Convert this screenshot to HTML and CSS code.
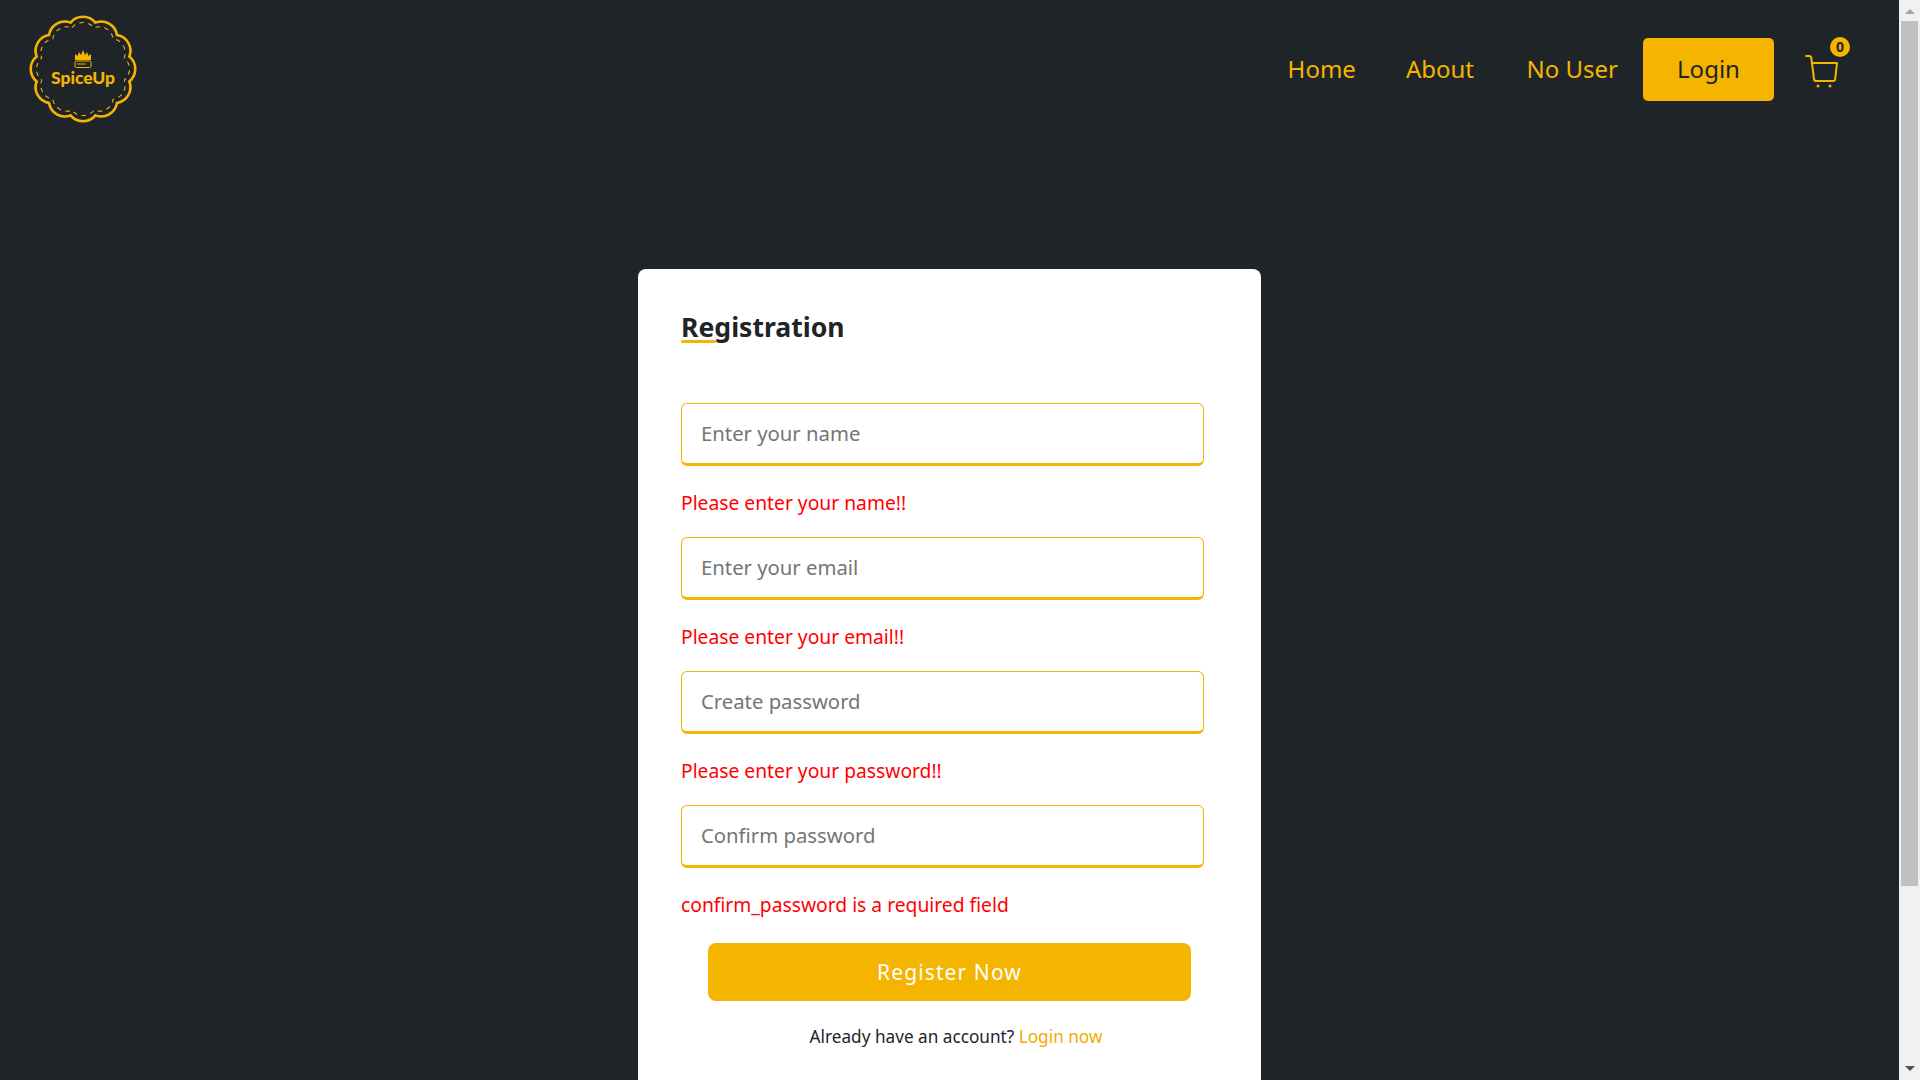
FILE: index.html
```html
<!DOCTYPE html>
<html lang="en">
<head>
<meta charset="utf-8">
<title>SpiceUp - Registration</title>
<link rel="stylesheet" href="styles.css">
</head>
<body>
<div class="page">
<header class="topbar">
  <a class="logo" href="#" aria-label="SpiceUp">
    <svg class="logo-badge" viewBox="-55 -55 110 110" width="110" height="110" fill="none">
      <defs>
        <path id="scallop" d="M-12.42 -46.36A16 16 0 0 1 12.42 -46.36A16 16 0 0 1 33.94 -33.94A16 16 0 0 1 46.36 -12.42A16 16 0 0 1 46.36 12.42A16 16 0 0 1 33.94 33.94A16 16 0 0 1 12.42 46.36A16 16 0 0 1 -12.42 46.36A16 16 0 0 1 -33.94 33.94A16 16 0 0 1 -46.36 12.42A16 16 0 0 1 -46.36 -12.42A16 16 0 0 1 -33.94 -33.94A16 16 0 0 1 -12.42 -46.36Z"/>
      </defs>
      <use href="#scallop" stroke="#f4b400" stroke-width="2.6"/>
      <use href="#scallop" transform="scale(.89)" stroke="#f4b400" stroke-width="1.2" stroke-dasharray="5 5"/>
      <path d="M-8 -9L-8 -15L-5.500 -13L-4 -17L-2 -14L0 -19L2 -14L4 -17L5.500 -13L8 -15L8 -9Z" fill="#f4b400"/>
      <rect x="-8" y="-8" width="16" height="6.500" rx="1.500" stroke="#f4b400" stroke-width="1"/>
      <path d="M-6 -5H3" stroke="#f4b400" stroke-width="1"/>
      <text class="logo-text" x="0" y="15" text-anchor="middle">SpiceUp</text>
    </svg>
  </a>
  <nav class="nav">
    <a class="nav-link" href="#">Home</a>
    <a class="nav-link" href="#">About</a>
    <a class="nav-link" href="#">No User</a>
    <a class="nav-btn" href="#">Login</a>
    <a class="cart" href="#" aria-label="Cart">
      <svg viewBox="0 0 36 36" width="36" height="36" fill="none" stroke="#f4b400" stroke-width="2" stroke-linecap="round" stroke-linejoin="round">
        <path d="M1 4H4.500Q6 4 6.300 6L9 27Q9.300 29 11 29H28Q30 29 30.200 27L32 11H6.800"/>
        <circle cx="13" cy="34" r="1.500" fill="#f4b400" stroke="none"/>
        <circle cx="25" cy="34" r="1.500" fill="#f4b400" stroke="none"/>
      </svg>
      <span class="badge">0</span>
    </a>
  </nav>
</header>
<main class="content">
  <section class="card">
    <h1 class="title">Registration</h1>
    <form class="form">
      <div class="field">
        <input class="input" type="text" placeholder="Enter your name">
        <p class="error">Please enter your name!!</p>
      </div>
      <div class="field">
        <input class="input" type="text" placeholder="Enter your email">
        <p class="error">Please enter your email!!</p>
      </div>
      <div class="field">
        <input class="input" type="password" placeholder="Create password">
        <p class="error">Please enter your password!!</p>
      </div>
      <div class="field">
        <input class="input" type="password" placeholder="Confirm password">
        <p class="error">confirm_password is a required field</p>
      </div>
      <button class="submit" type="button">Register Now</button>
    </form>
    <p class="switch">Already have an account? <a href="#">Login now</a></p>
  </section>
</main>
</div>
<aside class="scrollbar" aria-hidden="true">
  <span class="arrow-up"></span>
  <span class="thumb"></span>
  <span class="arrow-down"></span>
</aside>
</body>
</html>
```

FILE: styles.css
```css
* {
  box-sizing: border-box;
}

body {
  display: flex;
  height: 1080px;
  margin: 0;
  overflow: hidden;
  background: #1f2429;
  font-family: "Noto Sans", "Open Sans", sans-serif;
  color: #1f2429;
}

.page {
  flex: 1;
  min-width: 0;
}

.scrollbar {
  display: flex;
  flex-direction: column;
  align-items: center;
  width: 21px;
  padding: 9px 0 9px;
  background: #f1f1f1;
}

.arrow-up {
  width: 0;
  height: 0;
  border-left: 5px solid transparent;
  border-right: 5px solid transparent;
  border-bottom: 5px solid #a3a3a3;
}

.thumb {
  width: 17px;
  height: 865px;
  margin: 7px 0 auto;
  background: #c1c1c1;
}

.arrow-down {
  width: 0;
  height: 0;
  border-left: 5px solid transparent;
  border-right: 5px solid transparent;
  border-top: 5px solid #505050;
}

.topbar {
  display: flex;
  align-items: center;
  justify-content: space-between;
  height: 138px;
  padding: 0 58px 0 28px;
}

.logo {
  display: flex;
}

.logo-text {
  font-family: "Lato", "Noto Sans", sans-serif;
  font-size: 17.500px;
  font-weight: 900;
  fill: #f4b400;
}

.nav {
  display: flex;
  align-items: center;
}

.nav-link {
  margin: 0 50px 2px 0;
  font-size: 24px;
  color: #f4b400;
  text-decoration: none;
}

.nav-link:nth-child(2) {
  margin-right: 52.500px;
}

.nav-link:nth-child(3) {
  margin-right: 25px;
}

.nav-btn {
  display: flex;
  align-items: center;
  justify-content: center;
  width: 131px;
  height: 63px;
  padding-bottom: 2px;
  border-radius: 5px;
  background: #f4b400;
  color: #1f2429;
  font-size: 24px;
  text-decoration: none;
}

.cart {
  position: relative;
  display: flex;
  margin: 2px 0 0 31px;
}

.badge {
  position: absolute;
  top: -15px;
  right: -9px;
  width: 20px;
  height: 20px;
  border-radius: 50%;
  background: #f4b400;
  color: #1f2429;
  font-size: 14px;
  font-weight: 700;
  line-height: 20px;
  text-align: center;
}

.content {
  display: flex;
  justify-content: center;
  padding-top: 131px;
}

.card {
  width: 623px;
  padding: 38px 57px 45px 43px;
  border-radius: 8px;
  background: #fff;
}

.title {
  position: relative;
  width: max-content;
  height: 42px;
  margin: 0 0 54px;
  font-size: 26.600px;
  font-weight: 700;
  line-height: 40px;
}

.title::after {
  content: "";
  position: absolute;
  left: 0;
  top: 33px;
  width: 35px;
  height: 3px;
  border-radius: 2px;
  background: #f4b400;
}

.form {
  display: flex;
  flex-direction: column;
}

.field {
  display: flex;
  flex-direction: column;
  height: 134px;
}

.input {
  width: 100%;
  height: 63px;
  padding: 0 19px 2px;
  border: 1px solid #f4b400;
  border-bottom-width: 3px;
  border-radius: 6px;
  outline: none;
  background: #fff;
  font-family: inherit;
  font-size: 20.300px;
}

.input::placeholder {
  color: #757575;
  opacity: 1;
}

.error {
  margin: 24px 0 0;
  color: #ff0000;
  font-size: 19.250px;
  line-height: 26px;
}

.submit {
  align-self: center;
  width: 483px;
  height: 58px;
  margin: 4px 0 0 14px;
  padding-bottom: 2px;
  border: 0;
  border-radius: 8px;
  background: #f4b400;
  color: #fff;
  font-family: inherit;
  font-size: 21px;
  letter-spacing: 1.100px;
}

.switch {
  margin: 23px 0 0;
  padding-left: 27px;
  font-size: 17.200px;
  line-height: 26px;
  text-align: center;
}

.switch a {
  color: #f4a900;
  text-decoration: none;
}
```
